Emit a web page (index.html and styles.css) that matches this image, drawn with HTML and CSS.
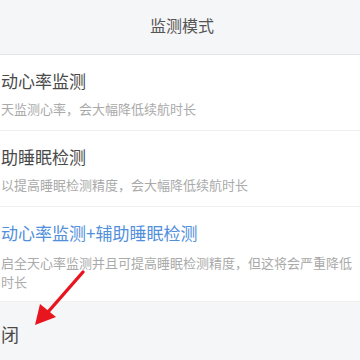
FILE: index.html
```html
<!DOCTYPE html>
<html lang="zh-CN">
  <head>
    <meta charset="UTF-8" />
    <meta name="viewport" content="width=device-width, initial-scale=1.0" />
    <title>监测模式</title>
    <link rel="stylesheet" href="styles.css">
  </head>
  <body>
    <div class="screen">
      <div class="header">监测模式</div>
      <div class="option">
        <div class="name">动心率监测</div>
        <div class="desc">天监测心率，会大幅降低续航时长</div>
      </div>
      <div class="option">
        <div class="name">助睡眠检测</div>
        <div class="desc">以提高睡眠检测精度，会大幅降低续航时长</div>
      </div>
      <div class="option selected">
        <div class="name">动心率监测+辅助睡眠检测</div>
        <div class="desc">启全天心率监测并且可提高睡眠检测精度，但这将会严重降低<br />时长</div>
      </div>
      <div class="option off">
        <div class="name">闭</div>
      </div>

      <!-- red pointer drawn over the list -->
      <svg class="pointer" width="360" height="360" viewBox="0 0 360 360">
        <path d="M83 272 L48 312" stroke="#e8151f" stroke-width="3.4" stroke-linecap="round" />
        <polygon points="35,325 40,304 56,317" fill="#e8151f" />
      </svg>
    </div>
  </body>
</html>
```

FILE: styles.css
```css
body {
  margin: 0;
  background: #f5f6f8;
  font-family: "Noto Sans CJK SC", "Noto Sans", sans-serif;
}
.screen {
  position: relative;
  width: 360px;
  height: 360px;
  overflow: hidden;
}
.header {
  height: 54px;
  line-height: 50px;
  padding-left: 4px;
  text-align: center;
  font-size: 16px;
  color: #555;
  background: #f5f6f8;
  border-bottom: 1px solid #e4e5e7;
}
.option {
  background: #fff;
  padding: 13px 0 12px 1px;
  border-bottom: 1px solid #f0f0f0;
  white-space: nowrap;
}
.option .name {
  font-size: 17px;
  line-height: 26px;
  color: #4a4a4a;
}
.option .desc {
  margin-top: 5px;
  font-size: 13px;
  line-height: 19px;
  color: #aaa;
}
.option.selected {
  padding-top: 13px;
  padding-bottom: 10px;
}
.option.selected .name {
  color: #5290dc;
}
.option.selected .desc {
  margin-top: 7px;
}
.option.off {
  background: #f5f6f8;
  border-bottom: none;
  padding-top: 19px;
}
.option.off .name {
  font-size: 18px;
}
.pointer {
  position: absolute;
  left: 0;
  top: 0;
}
```
